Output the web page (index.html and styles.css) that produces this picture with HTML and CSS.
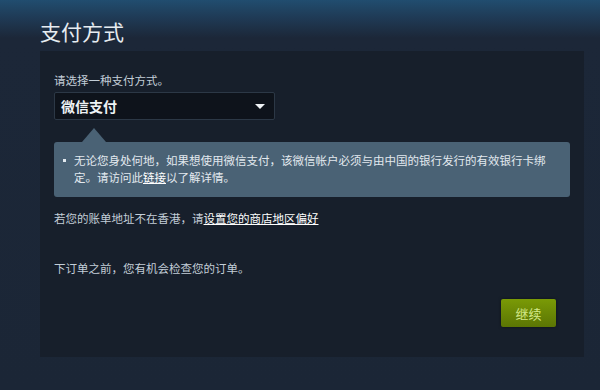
FILE: index.html
```html
<!DOCTYPE html>
<html lang="zh-CN">
<head>
<meta charset="utf-8">
<link rel="stylesheet" href="styles.css">
</head>
<body>
<div class="page">
  <h1 class="title">支付方式</h1>
  <div class="panel">
    <div class="label">请选择一种支付方式。</div>
    <div class="select">
      <span class="select-text">微信支付</span>
      <span class="caret"></span>
    </div>
    <div class="info">
      <ul class="info-list">
        <li>无论您身处何地，如果想使用微信支付，该微信帐户必须与由中国的银行发行的有效银行卡绑定。请访问此<a class="link" href="#">链接</a>以了解详情。</li>
      </ul>
    </div>
    <p class="note">若您的账单地址不在香港，请<a class="link" href="#">设置您的商店地区偏好</a></p>
    <p class="note review">下订单之前，您有机会检查您的订单。</p>
    <div class="actions">
      <button class="btn">继续</button>
    </div>
  </div>
</div>
</body>
</html>
```
FILE: styles.css
```css
html, body {
  margin: 0;
  padding: 0;
}
body {
  background: linear-gradient(to bottom, #214d6f 0px, #1f3a55 18px, #1c2738 38px, #1b2636 100%);
  font-family: "Noto Sans CJK SC", "Noto Sans", sans-serif;
  color: #c6d4df;
  width: 600px;
  height: 390px;
  overflow: hidden;
}
.page {
  padding-left: 40px;
  padding-right: 16px;
}
.title {
  margin: 0;
  padding-top: 17px;
  font-size: 21px;
  line-height: 28px;
  font-weight: normal;
  color: #e6ecf1;
}
.panel {
  margin-top: 6px;
  background: #171f2b;
  padding: 20px 14px 30px 14px;
}
.label {
  font-size: 11.5px;
  line-height: 18px;
  color: #c3ced8;
}
.select {
  margin-top: 3px;
  width: 221px;
  height: 28px;
  box-sizing: border-box;
  background: #0e131b;
  border: 1px solid #2c3846;
  border-radius: 2px;
  display: flex;
  align-items: center;
  justify-content: space-between;
  padding: 0 9px 0 6px;
}
.select-text {
  font-size: 14px;
  font-weight: bold;
  color: #eef2f5;
}
.caret {
  width: 0;
  height: 0;
  border-left: 5px solid transparent;
  border-right: 5px solid transparent;
  border-top: 5px solid #f0f3f6;
}
.info {
  position: relative;
  margin-top: 22px;
  background: #4a6275;
  border-radius: 3px;
  padding: 10px 8px 11px 20px;
}
.info::before {
  content: "";
  position: absolute;
  top: -14px;
  left: 28px;
  width: 0;
  height: 0;
  border-left: 12px solid transparent;
  border-right: 12px solid transparent;
  border-bottom: 14px solid #4a6275;
}
.info-list {
  margin: 0;
  padding: 0;
  list-style: none;
}
.info-list li {
  position: relative;
  font-size: 11.5px;
  line-height: 17px;
  color: #e2e9ef;
}
.info-list li::before {
  content: "";
  position: absolute;
  left: -11px;
  top: 7px;
  width: 3px;
  height: 3px;
  background: #e2e9ef;
}
.link {
  color: #ffffff;
  text-decoration: underline;
}
.note {
  margin: 12px 0 0 0;
  font-size: 11.5px;
  line-height: 18px;
  color: #c3ced8;
}
.review {
  margin-top: 32px;
}
.actions {
  display: flex;
  justify-content: flex-end;
  margin-top: 22px;
  padding-right: 14px;
}
.btn {
  width: 55px;
  height: 28px;
  border: none;
  border-radius: 2px;
  background: linear-gradient(to bottom, #7a9a06 0%, #5b7504 100%);
  color: #d4e98a;
  font-family: "Noto Sans CJK SC", sans-serif;
  font-size: 13px;
  padding: 0;
  box-shadow: 0 0 3px rgba(0,0,0,0.5);
}
```
